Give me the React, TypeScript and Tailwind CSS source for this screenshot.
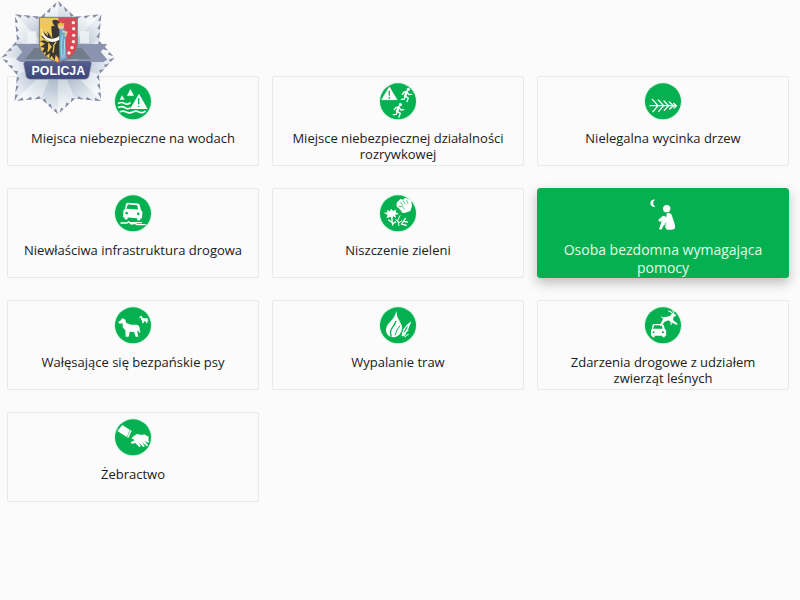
import { useState } from "react";
import type { ReactNode } from "react";
import clsx from "clsx";

interface Category {
  id: string;
  label: string;
  icon: ReactNode;
}

const GREEN = "#05b050";

function Car() {
  return (
    <>
      <path fill="#fff" d="M7 0h30q5 0 7 5l4 14q5 2 5 7v18h-5v6h-9v-6H10v6H1v-6h-5V26q0-5 4-7L2 5q1-5 5-5z" />
      <path fill={GREEN} d="M8 5h28l4 13H4z" />
      <circle cx="6" cy="31" r="4" fill={GREEN} />
      <circle cx="41" cy="31" r="4" fill={GREEN} />
    </>
  );
}

function Runner() {
  return (
    <>
      <circle cx="19" cy="4" r="5" fill="#fff" />
      <path
        d="M15 12L10 24l9 6-4 11M10 24L7 33l-9 1M15 12L6 12 1 19M15 12l6 8 8-1"
        fill="none"
        stroke="#fff"
        strokeWidth="4"
        strokeLinecap="round"
        strokeLinejoin="round"
      />
      <path d="M14 11L9 24" stroke="#fff" strokeWidth="7" strokeLinecap="round" />
    </>
  );
}

function Dog() {
  return (
    <path
      fill="#fff"
      d="M0 11l7-4 5-7 9 3 4 11 14 5 17 0q9 2 9 12l2 13-4-2-3-7-2 5 3 15h-8l-5-14-13-1-3 15h-9l-1-19-8-9 0-12-9 1z"
    />
  );
}

function Water() {
  return (
    <>
      <path d="M51 53L61 33l11 20z" fill="#fff" />
      <path d="M29 65l7-13 8 13z" fill="#fff" />
      <path d="M60 93L87 47l26 46z" fill="#fff" />
      <path d="M86 61v18M86 83v4" stroke={GREEN} strokeWidth="4" />
      <g fill="none" stroke="#fff" strokeWidth="5" strokeLinecap="round">
        <path d="M26 76q9-5 17 0t17-1" />
        <path d="M26 88q10-5 19 1t14 1" />
        <path d="M31 101q9-4 18 1t19 0 19 0 18-2" />
      </g>
    </>
  );
}

function Recreation() {
  return (
    <>
      <path d="M20 65L43 27l23 38z" fill="#fff" stroke="#fff" strokeWidth="2" strokeLinejoin="round" />
      <path d="M43 38v15M43 57v5" stroke={GREEN} strokeWidth="4" />
      <g transform="translate(81 30)">
        <Runner />
      </g>
      <g transform="translate(57 76)">
        <Runner />
      </g>
    </>
  );
}

function Branch() {
  return (
    <g fill="none" stroke="#fff" strokeWidth="4" strokeLinecap="round" strokeLinejoin="round">
      <path d="M30 83h78" />
      <path d="M37 64l17 19-15 18" />
      <path d="M55 66l16 17-15 17" />
      <path d="M72 69l14 14-13 14" />
      <path d="M88 72l12 11-11 10" />
      <path d="M101 76l8 7-7 7" />
    </g>
  );
}

function RoadDamage() {
  return (
    <>
      <g transform="translate(46 38) rotate(4)">
        <Car />
      </g>
      <path
        d="M33 99h18l5-4 8 7 12-2 4 4h27M62 98h32"
        fill="none"
        stroke="#fff"
        strokeWidth="4"
        strokeLinecap="round"
      />
    </>
  );
}

function Greenery() {
  return (
    <>
      <path
        fill="#fff"
        d="M65 38l11-11 8 2 7-6 10 4 8 4 2 17-5 15-14 5-9 1-9-12-9-7z"
      />
      <path d="M76 35l7 12M84 31l7 12M94 29l5 12M70 50l12-1 7 9" fill="none" stroke={GREEN} strokeWidth="2" />
      <path
        fill="#fff"
        d="M26 68l12-1-3-8 9 5 5-8 5 7 10-4-2 8 10 5-12 2 4 9-10-4-3 11-5-10-12 5 4-10z"
      />
      <g fill="none" stroke="#fff" strokeLinecap="round">
        <path d="M50 82l3 23M51 97l-10-7M53 102l9-7" strokeWidth="4" />
        <path d="M75 77l-7 14 4 16M70 94l-8-5M71 99l10-7" strokeWidth="3" />
        <path d="M85 94l12 2M91 85l-5 8-6 9 14 4" strokeWidth="4" />
      </g>
    </>
  );
}

function Homeless() {
  return (
    <>
      <path d="M45 29a11 11 0 1 0 1 21 12 12 0 0 1-1-21z" fill="#fff" />
      <circle cx="80" cy="56" r="11" fill="#fff" />
      <path
        fill="#fff"
        d="M80 70q10-4 15 4l10 31q3 14-9 14H82q-5-1-6-7l-3-9-7 13q-3 5-9 1l8-23-8 1-2-6 14-12q7 1 10 5z"
      />
      <path d="M79 98l-4 3 3 8" fill="none" stroke={GREEN} strokeWidth="2" />
    </>
  );
}

function Dogs() {
  return (
    <>
      <g transform="translate(24 49)">
        <Dog />
      </g>
      <g transform="translate(87 41) scale(.42)">
        <Dog />
      </g>
    </>
  );
}

function BurningGrass() {
  return (
    <>
      <path fill="#fff" d="M64 27q1 18 10 31 11 17 5 30-6 15-21 18-19 1-24-15-4-16 10-30 16-15 20-34z" />
      <path d="M63 57q-4 12-11 20-9 11-3 27" fill="none" stroke={GREEN} strokeWidth="4" />
      <path d="M75 71q-11 13-15 29" fill="none" stroke={GREEN} strokeWidth="3" />
      <g fill="none" stroke="#fff" strokeLinecap="round">
        <path d="M82 101q1-22 23-38-6 20-21 37" strokeWidth="4" />
        <path d="M88 102q2-13 12-18M90 105q5-8 10-8" strokeWidth="3" />
      </g>
    </>
  );
}

function ForestAnimals() {
  return (
    <>
      <g transform="translate(36 66) scale(.8)">
        <Car />
      </g>
      <path
        fill="#fff"
        d="M70 46l19-3 8-9 7 1 5 7-8 2-2 10 14 11-2 4-18-8-8-6-11 4-12 14-3-3 9-16z"
      />
      <path
        d="M97 35l-6-8M100 34l-1-11M94 31l-9-4M94 57l-1 11M69 48l-5-3"
        fill="none"
        stroke="#fff"
        strokeWidth="3"
        strokeLinecap="round"
      />
    </>
  );
}

function Begging() {
  return (
    <>
      <path fill="#fff" d="M22 51l15-18 28 18-10 21z" />
      <path d="M60 50l-9 19" stroke={GREEN} strokeWidth="2" />
      <path
        fill="#fff"
        d="M64 72l16-12 16 3 21 19q1 4-3 4l-11-6 11 13q0 4-4 3L97 84l7 12q-1 4-5 2L87 86l5 11q-1 4-5 1L76 87l-9 2q-5 0-5-4l12-6z"
      />
      <path fill="#fff" d="M88 66l14-5 14 7-1 15z" />
    </>
  );
}

const categories: Category[] = [
  { id: "water", label: "Miejsca niebezpieczne na wodach", icon: <Water /> },
  { id: "recreation", label: "Miejsce niebezpiecznej działalności rozrywkowej", icon: <Recreation /> },
  { id: "trees", label: "Nielegalna wycinka drzew", icon: <Branch /> },
  { id: "road", label: "Niewłaściwa infrastruktura drogowa", icon: <RoadDamage /> },
  { id: "greenery", label: "Niszczenie zieleni", icon: <Greenery /> },
  { id: "homeless", label: "Osoba bezdomna wymagająca pomocy", icon: <Homeless /> },
  { id: "dogs", label: "Wałęsające się bezpańskie psy", icon: <Dogs /> },
  { id: "grass", label: "Wypalanie traw", icon: <BurningGrass /> },
  { id: "animals", label: "Zdarzenia drogowe z udziałem zwierząt leśnych", icon: <ForestAnimals /> },
  { id: "begging", label: "Żebractwo", icon: <Begging /> },
];

// Eight-pointed badge, every edge cut into small steps with a dark notch.
function starGeometry() {
  const cx = 174;
  const cy = 173;
  const at = (i: number) => {
    const a = (i * Math.PI) / 8 - Math.PI / 2;
    const r = i % 2 ? 133 : i % 4 ? 184 : 170;
    return [cx + r * Math.cos(a), cy + r * Math.sin(a)];
  };
  const outline: string[] = [];
  const notches: string[] = [];
  const facets: string[] = [];
  for (let i = 0; i < 16; i++) {
    const [x1, y1] = at(i);
    const [x2, y2] = at(i + 1);
    facets.push(`M${cx} ${cy}L${x1} ${y1}L${x2} ${y2}z`);
    for (let s = 0; s < 3; s++) {
      const x = x1 + ((x2 - x1) * s) / 3;
      const y = y1 + ((y2 - y1) * s) / 3;
      const ex = x1 + ((x2 - x1) * (s + 0.75)) / 3;
      const ey = y1 + ((y2 - y1) * (s + 0.75)) / 3;
      const mx = (x + ex) / 2 + (cx - x) * 0.07;
      const my = (y + ey) / 2 + (cy - y) * 0.07;
      outline.push(`${x},${y} ${ex},${ey}`);
      notches.push(`M${x} ${y}L${ex} ${ey}L${mx} ${my}z`);
    }
  }
  return { outline: outline.join(" "), notches: notches.join(""), facets };
}

const star = starGeometry();

function PoliceBadge() {
  return (
    <svg viewBox="0 0 360 360" className="pointer-events-none absolute top-0 left-0 size-30" role="img" aria-label="Policja">
      <defs>
        <radialGradient id="silver" gradientUnits="userSpaceOnUse" cx="172" cy="173" r="180">
          <stop offset="0" stopColor="#7f8e9f" />
          <stop offset=".5" stopColor="#bcc9d6" />
          <stop offset=".85" stopColor="#f0f4f8" />
        </radialGradient>
        <linearGradient id="plate" x2="0" y2="1">
          <stop offset="0" stopColor="#56608a" />
          <stop offset="1" stopColor="#3c467a" />
        </linearGradient>
        <clipPath id="shield">
          <path d="M118 52h114v82q-2 36-57 54-55-18-57-54z" />
        </clipPath>
      </defs>
      <polygon points={star.outline} fill="url(#silver)" opacity=".95" />
      {star.facets.map((d, i) => (
        <path key={i} d={d} fill={i % 2 ? "#ffffff" : "#a2b0c4"} opacity={i % 2 ? 0.35 : 0.1} />
      ))}
      <path d={star.notches} fill="#8589a3" />
      <path d="M82 94h27v36H82zM240 94h27v36h-27z" fill="#f3f6f9" opacity=".8" />
      <path d="M48 132h75v54H62l-14-8 19-22zM230 132h92l-20 23 20 24-13 7h-75z" fill="#8a93b0" />
      <path d="M75 178l28-34h142l28 34z" fill="#727d8b" />
      <path d="M79 182h188q9 0 7 12l-7 35q-3 9-13 9H91q-10 0-13-9l-7-35q-1-12 8-12z" fill="url(#plate)" stroke="#a6adc2" strokeWidth="2" />
      <g clipPath="url(#shield)">
        <path d="M118 52h60v136h-60z" fill="#efc85a" />
        <path d="M175 52h60v136h-60z" fill="#dc4754" />
        <path
          fill="#3a3835"
          d="M158 61q13-5 20 5v112l-11-14-3 18-9-15-7 12 1-19-15 11 4-16-15 6 11-18-13-2 14-10-16-8 17-2-14-14 16 6-9-20 15 16-2-15 15 22-3-32z"
        />
        <path
          d="M153 64l-14-4 8 14 13 2zM145 130l8 10-10 15M162 138l-3 20M134 118l12 8M168 126l-8 12"
          fill="#efc85a"
          stroke="#efc85a"
          strokeWidth="4"
        />
        <path d="M124 80q4 34 31 36 14 0 23-9v12q-20 13-38 1-17-10-16-40z" fill="#fffdf2" />
        <path d="M179 88l13-4 8 17-4 24 5 52-22 8z" fill="#6ba6ce" />
        <path d="M187 104l-4 35 4 37M194 118l-2 54" fill="none" stroke="#b8d9e7" strokeWidth="3" />
        <circle cx="183" cy="79" r="9" fill="#f0c8a0" />
        <path d="M173 77v-9l5 4 4-7 4 7 7-4-1 9z" fill="#e6bd42" />
        <path d="M187 94l13 3-5 12" fill="none" stroke="#f0c8a0" strokeWidth="5" />
        <g fill="#fff0e8">
          <circle cx="220" cy="68" r="5" />
          <circle cx="221" cy="86" r="5" />
          <circle cx="221" cy="106" r="5" />
          <circle cx="220" cy="125" r="5" />
          <circle cx="216" cy="143" r="5" />
          <circle cx="207" cy="159" r="5" />
        </g>
      </g>
      <path d="M118 52h114v82q-2 36-57 54-55-18-57-54z" fill="none" stroke="#74757f" strokeWidth="3" />
      <text x="175" y="225" textAnchor="middle" fill="#fff" className="font-['Liberation_Sans',sans-serif] text-[37px] font-bold">
        POLICJA
      </text>
    </svg>
  );
}

function CategoryCard({ category, selected, onSelect }: { category: Category; selected: boolean; onSelect: () => void }) {
  return (
    <button
      type="button"
      aria-pressed={selected}
      onClick={onSelect}
      className={clsx(
        "flex min-h-[90px] cursor-pointer flex-col items-center border px-3 pt-px text-center",
        selected
          ? "gap-[5px] rounded-[3px] border-[#05b050] bg-[#05b050] text-sm leading-[18px] text-[#e4fbe9] shadow-[0_5px_12px_rgba(0,0,0,0.25)]"
          : "gap-1.5 rounded-xs border-[#e9e9e9] bg-[#fbfbfb] text-[13px] leading-4 text-[#202020]",
      )}
    >
      <svg viewBox="0 0 138 138" className="size-[46px] shrink-0" aria-hidden="true">
        <circle cx="69" cy="70" r="57" fill={selected ? GREEN : "#d9f7e3"} />
        <circle cx="69" cy="70" r="54" fill={GREEN} />
        {category.icon}
      </svg>
      <span>{category.label}</span>
    </button>
  );
}

export default function App() {
  const [selectedId, setSelectedId] = useState("homeless");

  return (
    <main className="relative min-h-screen bg-[#fbfbfb] pt-[76px] pr-[11px] pb-6 pl-[7px] font-['Open_Sans','Noto_Sans',sans-serif]">
      <div className="grid grid-cols-3 gap-x-[13px] gap-y-[22px]">
        {categories.map((c) => (
          <CategoryCard key={c.id} category={c} selected={c.id === selectedId} onSelect={() => setSelectedId(c.id)} />
        ))}
      </div>
      <PoliceBadge />
    </main>
  );
}
